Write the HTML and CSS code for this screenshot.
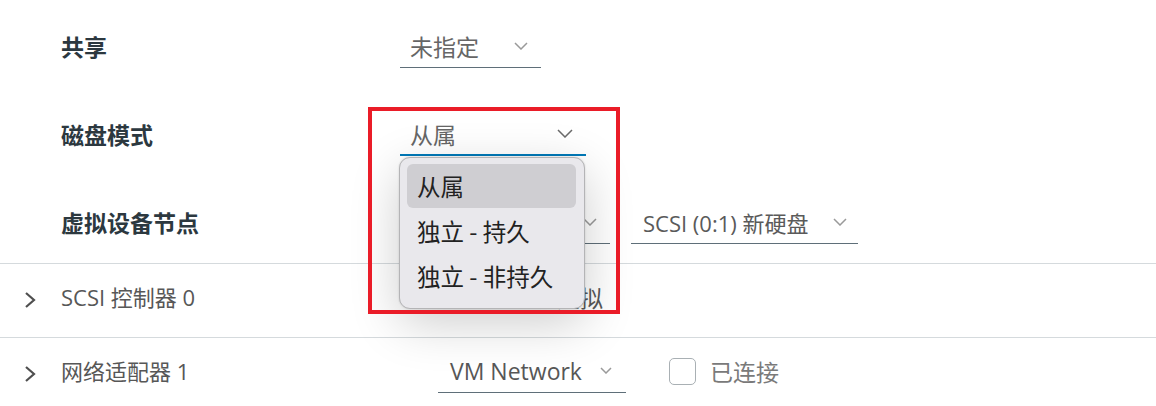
FILE: index.html
```html
<!DOCTYPE html>
<html>
<head>
  <title>新硬盘</title>
  <link rel="stylesheet" href="styles.css">
</head>
<body>
  <div class="page">
    <div class="fields">
      <div class="field">
        <div class="label">共享</div>
        <div class="select select-share">
          <span>未指定</span>
          <svg class="caret" width="14" height="8" viewBox="0 0 14 8"><polyline points="1,1 7,7 13,1"/></svg>
        </div>
      </div>
      <div class="field">
        <div class="label">磁盘模式</div>
        <div class="select select-mode active">
          <span>从属</span>
          <svg class="caret" width="16" height="9" viewBox="0 0 16 9"><polyline points="1,1 8,8 15,1"/></svg>
        </div>
      </div>
      <div class="field">
        <div class="label">虚拟设备节点</div>
        <div class="select select-ctrl">
          <span>SCSI 控制器 0</span>
          <svg class="caret" width="14" height="8" viewBox="0 0 14 8"><polyline points="1,1 7,7 13,1"/></svg>
        </div>
        <div class="select select-node">
          <span>SCSI (0:1) 新硬盘</span>
          <svg class="caret" width="14" height="8" viewBox="0 0 14 8"><polyline points="1,1 7,7 13,1"/></svg>
        </div>
      </div>
    </div>

    <div class="device-row">
      <svg class="expander" width="12" height="16" viewBox="0 0 12 16"><polyline points="2,1 10,8 2,15"/></svg>
      <div class="device-name">SCSI 控制器 0</div>
      <div class="device-value">虚拟</div>
    </div>

    <div class="device-row">
      <svg class="expander" width="12" height="16" viewBox="0 0 12 16"><polyline points="2,1 10,8 2,15"/></svg>
      <div class="device-name">网络适配器 1</div>
      <div class="select select-net">
        <span>VM Network</span>
        <svg class="caret" width="12" height="7" viewBox="0 0 12 7"><polyline points="1,1 6,6 11,1"/></svg>
      </div>
      <label class="check">
        <span class="check-box"></span>
        <span>已连接</span>
      </label>
    </div>

    <!-- open native menu of 磁盘模式 -->
    <div class="menu">
      <div class="menu-item selected">从属</div>
      <div class="menu-item">独立 - 持久</div>
      <div class="menu-item">独立 - 非持久</div>
    </div>

    <div class="highlight"></div>
  </div>
</body>
</html>
```

FILE: styles.css
```css
body {
  margin: 0;
  background: #fff;
  font-family: "Open Sans", "Noto Sans CJK SC", sans-serif;
  color: #333;
}
.page {
  position: relative;
  width: 1156px;
  height: 406px;
  overflow: hidden;
}
.fields {
  display: flex;
  flex-direction: column;
  gap: 44px;
  padding: 25px 0 18px 61px;
}
.field {
  display: flex;
  align-items: flex-start;
  height: 44px;
}
.label {
  width: 339px;
  height: 42px;
  line-height: 42px;
  font-family: "Noto Sans CJK SC", sans-serif;
  font-size: 23px;
  font-weight: bold;
  color: #2c383f;
}
.select {
  display: flex;
  align-items: center;
  justify-content: space-between;
  box-sizing: border-box;
  height: 43px;
  padding: 0 13px 0 10px;
  border-bottom: 1px solid #5f6f79;
  font-size: 23px;
  color: #666;
}
.caret {
  fill: none;
  stroke: #9a9a9a;
  stroke-width: 1.5;
}
.select-share {
  width: 141px;
}
.select-mode {
  width: 186px;
}
.select-mode.active {
  border-bottom: 2px solid #0079b8;
}
.select-mode .caret {
  stroke: #6a6a6a;
}
.select-ctrl {
  width: 210px;
  margin-right: 21px;
}
.select-node {
  width: 227px;
  padding-left: 12px;
  padding-right: 11px;
  font-size: 22px;
  color: #5a5a5a;
}
.device-row {
  display: flex;
  align-items: center;
  padding: 11px 0 18px 24px;
  border-top: 1px solid #d5dadd;
  font-size: 22px;
  color: #575757;
}
.expander {
  fill: none;
  stroke: #4f4f4f;
  stroke-width: 2.2;
  margin-right: 25px;
  margin-top: 5px;
}
.device-name {
  width: 377px;
  height: 44px;
  line-height: 44px;
}
.device-value {
  margin-left: 119px;
  font-size: 23px;
}
.select-net {
  width: 188px;
  height: 44px;
  padding-left: 12px;
  padding-right: 14px;
  color: #575757;
}
.check {
  display: flex;
  align-items: center;
  gap: 14px;
  margin-left: 43px;
  font-size: 23px;
  color: #7a7a7a;
}
.check-box {
  width: 25px;
  height: 25px;
  border: 1px solid #a9b0b4;
  border-radius: 5px;
  background: #fff;
}

/* dropdown overlay */
.menu {
  position: absolute;
  left: 399px;
  top: 157px;
  width: 186px;
  box-sizing: border-box;
  padding: 6px 8px 9px 7px;
  background: #e9e8ec;
  border: 1px solid #b4b4b6;
  border-radius: 11px;
  box-shadow: 0 14px 50px rgba(0,0,0,0.2), 0 0 2px rgba(0,0,0,0.15);
  font-family: "Noto Sans CJK SC", sans-serif;
}
.menu-item {
  height: 45px;
  line-height: 45px;
  padding-left: 10px;
  border-radius: 6px;
  font-size: 23.5px;
  color: #222;
}
.menu-item.selected {
  height: 44px;
  line-height: 44px;
  margin-bottom: 1px;
  background: #cfced2;
}
.highlight {
  position: absolute;
  left: 368px;
  top: 107px;
  width: 252px;
  height: 207px;
  box-sizing: border-box;
  border: 4px solid #ea1c28;
}
```
